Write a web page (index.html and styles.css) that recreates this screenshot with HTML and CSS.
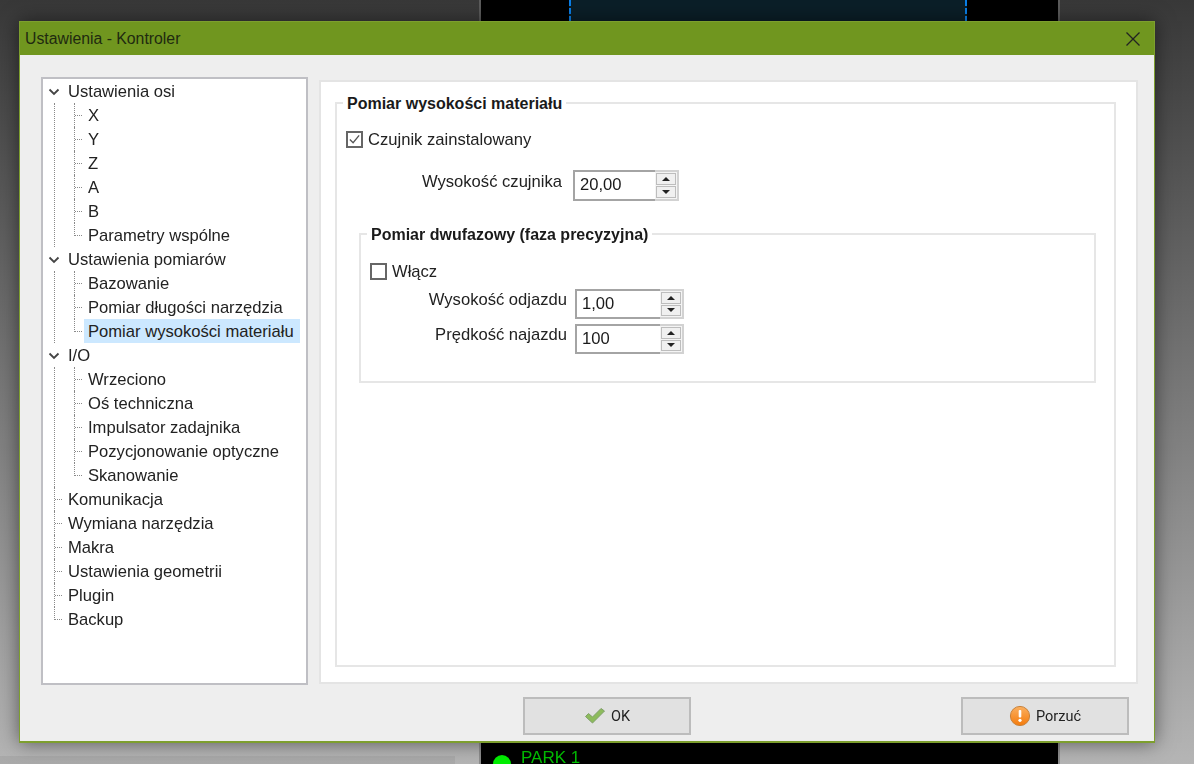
FILE: index.html
```html
<!DOCTYPE html>
<html lang="pl">
<head>
<meta charset="utf-8">
<title>Ustawienia - Kontroler</title>
<link rel="stylesheet" href="styles.css">
</head>
<body>
<div class="backdrop">
  <div class="strip"></div>
  <div class="app-top"><div class="app-view"></div></div>
  <div class="app-bottom">
    <span class="led"></span><span class="park">PARK 1</span>
  </div>
</div>
<div class="dialog">
  <header class="titlebar">
    <span>Ustawienia - Kontroler</span>
    <svg class="close" width="16" height="16" viewBox="0 0 16 16"><path d="M1.5 1.5l13 13M14.5 1.5l-13 13" stroke="#222" stroke-width="1.3" fill="none"/></svg>
  </header>
  <div class="content">
    <nav class="tree">
      <div class="row branch"><svg class="chev" width="12" height="8" viewBox="0 0 12 8"><path d="M1.5 1.5L6 6l4.5-4.5" stroke="#444" stroke-width="1.8" fill="none"/></svg>Ustawienia osi</div>
      <div class="children">
        <div class="row leaf">X</div>
        <div class="row leaf">Y</div>
        <div class="row leaf">Z</div>
        <div class="row leaf">A</div>
        <div class="row leaf">B</div>
        <div class="row leaf last">Parametry wspólne</div>
      </div>
      <div class="row branch"><svg class="chev" width="12" height="8" viewBox="0 0 12 8"><path d="M1.5 1.5L6 6l4.5-4.5" stroke="#444" stroke-width="1.8" fill="none"/></svg>Ustawienia pomiarów</div>
      <div class="children">
        <div class="row leaf">Bazowanie</div>
        <div class="row leaf">Pomiar długości narzędzia</div>
        <div class="row leaf last selected"><span class="sel">Pomiar wysokości materiału</span></div>
      </div>
      <div class="row branch"><svg class="chev" width="12" height="8" viewBox="0 0 12 8"><path d="M1.5 1.5L6 6l4.5-4.5" stroke="#444" stroke-width="1.8" fill="none"/></svg>I/O</div>
      <div class="children">
        <div class="row leaf">Wrzeciono</div>
        <div class="row leaf">Oś techniczna</div>
        <div class="row leaf">Impulsator zadajnika</div>
        <div class="row leaf">Pozycjonowanie optyczne</div>
        <div class="row leaf last">Skanowanie</div>
      </div>
      <div class="row top">Komunikacja</div>
      <div class="row top">Wymiana narzędzia</div>
      <div class="row top">Makra</div>
      <div class="row top">Ustawienia geometrii</div>
      <div class="row top">Plugin</div>
      <div class="row top last">Backup</div>
    </nav>
    <main class="panel">
      <fieldset class="group outer">
        <legend>Pomiar wysokości materiału</legend>
        <label class="check first"><span class="box"><svg width="14" height="14" viewBox="0 0 14 14"><path d="M2 7.5l3.5 3.5L12 3" stroke="#555" stroke-width="1.4" fill="none"/></svg></span>Czujnik zainstalowany</label>
        <div class="field sensor">
          <span class="field-label">Wysokość czujnika</span>
          <div class="spin wide">
            <span class="spin-value">20,00</span>
            <div class="spin-btns">
              <span class="spin-btn"><i class="up"></i></span>
              <span class="spin-btn"><i class="down"></i></span>
            </div>
          </div>
        </div>
        <fieldset class="group inner">
          <legend>Pomiar dwufazowy (faza precyzyjna)</legend>
          <label class="check"><span class="box"></span>Włącz</label>
          <div class="field phase">
            <span class="field-label">Wysokość odjazdu</span>
            <div class="spin">
              <span class="spin-value">1,00</span>
              <div class="spin-btns">
                <span class="spin-btn"><i class="up"></i></span>
                <span class="spin-btn"><i class="down"></i></span>
              </div>
            </div>
          </div>
          <div class="field phase">
            <span class="field-label">Prędkość najazdu</span>
            <div class="spin">
              <span class="spin-value">100</span>
              <div class="spin-btns">
                <span class="spin-btn"><i class="up"></i></span>
                <span class="spin-btn"><i class="down"></i></span>
              </div>
            </div>
          </div>
        </fieldset>
      </fieldset>
    </main>
  </div>
  <footer class="footer">
    <button class="btn" type="button">
      <svg width="22" height="18" viewBox="0 0 22 18"><path d="M1.5 9.5l3-3 4 3.5L17 1.5l3.5 2.5L8.5 16z" fill="#8dbb5c" stroke="#7f9f6a" stroke-width="1"/></svg>OK
    </button>
    <button class="btn" type="button">
      <svg width="22" height="22" viewBox="0 0 22 22"><defs><linearGradient id="ora" x1="0" y1="0" x2="0" y2="1"><stop offset="0" stop-color="#fbb060"/><stop offset="1" stop-color="#f47b0c"/></linearGradient></defs><circle cx="11" cy="11" r="9.6" fill="url(#ora)" stroke="#c9823a"/><rect x="9.7" y="5" width="2.6" height="7.5" rx="1" fill="#fff"/><circle cx="11" cy="15.3" r="1.6" fill="#fff"/></svg>Porzuć
    </button>
  </footer>
</div>
</body>
</html>
```

FILE: styles.css
```css
* { box-sizing: border-box; }
html, body { margin: 0; height: 100%; }
body {
  position: relative;
  width: 1194px;
  height: 764px;
  overflow: hidden;
  font-family: "Liberation Sans", Arial, sans-serif;
  font-size: 16.6px;
  color: #222;
  background: linear-gradient(#383838, #b5b5b5);
}
.backdrop { position: absolute; inset: 0; filter: blur(.4px); }
.strip {
  position: absolute; left: 0; bottom: 0; width: 455px; height: 8px;
  background: rgba(0,0,0,.06);
}
.app-top {
  position: absolute; left: 479px; top: 0; width: 581px; height: 30px;
  background: #000;
  border-left: 2px solid #5c5c5c;
  border-right: 2px solid #5c5c5c;
}
.app-view {
  margin-left: 88px; width: 398px; height: 30px;
  background: #0b1f28;
  border-left: 2px dashed #0a7fe8;
  border-right: 2px dashed #0a7fe8;
}
.app-bottom {
  position: absolute; left: 479px; top: 740px; width: 581px; height: 24px;
  background: #000;
  border-left: 2px solid #8c8c8c;
  border-right: 2px solid #8c8c8c;
  display: flex; align-items: flex-start;
  padding: 9px 0 0 12px;
  gap: 10px;
  color: #00c400;
}
.led { width: 18px; height: 18px; border-radius: 50%; background: #00f000; margin-top: 6px; }
.park { font-size: 17px; line-height: 18px; }

.dialog {
  position: absolute; left: 19px; top: 21px; width: 1136px; height: 722px;
  background: #eeeeee;
  border: 1px solid #7d9f2e;
  border-bottom-width: 2px;
  box-shadow: 0 0 18px rgba(0,0,0,.5);
  display: flex; flex-direction: column;
  padding-bottom: 6px;
  filter: blur(.35px);
}
.titlebar {
  height: 33px; flex: none;
  background: #70961f;
  display: flex; align-items: center; justify-content: space-between;
  padding: 0 13px 0 5px;
  font-size: 15.8px;
  color: #1f2a10;
}
.content {
  flex: 1; display: flex; gap: 11px;
  padding: 22px 16px 0 21px;
  min-height: 0;
}
.tree {
  width: 267px; flex: none;
  background: #fff;
  border: 2px solid #bfbfc4;
}
.row {
  position: relative;
  height: 24px;
  padding-top: 2px;
  display: flex; align-items: center;
  white-space: nowrap;
  color: #222;
}
.branch, .top { padding-left: 25px; }
.chev { position: absolute; left: 5px; top: 9px; }
.children { margin-left: 11px; border-left: 1px dotted #8a8a8a; }
.top::before, .top::after, .leaf::before, .leaf::after { content: ""; position: absolute; }
.top::before, .leaf::before {
  top: 0; bottom: 0; border-left: 1px dotted #8a8a8a;
}
.top::after, .leaf::after {
  top: 12px; height: 0; border-top: 1px dotted #8a8a8a;
}
.top::before { left: 11px; }
.top::after { left: 12px; width: 7px; }
.leaf { padding-left: 33px; }
.leaf::before { left: 19px; }
.leaf::after { left: 20px; width: 7px; }
.last::before { bottom: 11px; }
.selected { padding-top: 0; }
.sel {
  display: flex; align-items: center;
  margin-left: -4px; padding: 2px 0 0 4px;
  width: 216px; height: 24px;
  background: #cce8ff;
}
.panel {
  flex: 1; min-width: 0;
  margin: 3px 0 1px;
  background: #fff;
  border: 2px solid #e4e4e4;
  padding: 12px 20px 15px 14px;
  display: flex;
}
.group {
  margin: 0;
  border: 2px solid #e6e6e6;
  min-width: 0;
}
.group legend {
  position: relative;
  top: 1px;
  font-weight: bold;
  font-size: 16px;
  line-height: 18px;
  padding: 0 4px;
  margin-left: -3px;
  color: #1a1a1a;
}
.outer { flex: 1; padding: 0 18px 0 9px; margin: 0; }
.inner { margin: 24px 0 0 13px; height: 158px; padding: 0 9px; }
.check {
  display: flex; align-items: center; gap: 5px;
  height: 18px;
  padding-top: 2px;
}
.check.first { margin-top: 18px; }
.inner .check { margin-top: 19px; }
.box {
  width: 17px; height: 17px; flex: none;
  margin-top: -2px;
  border: 2px solid #666;
  background: #fff;
  display: flex; align-items: center; justify-content: center;
}
.field { display: flex; align-items: center; }
.field-label { text-align: right; position: relative; }
.sensor { margin-top: 22px; }
.sensor .field-label { width: 216px; margin-right: 11px; top: -4px; }
.phase { margin-top: 9px; }
.phase + .phase { margin-top: 5px; }
.phase .field-label { width: 197px; margin-right: 8px; top: -4px; }
.spin {
  width: 109px; height: 30px;
  display: flex;
  background: #fff;
}
.wide { width: 106px; height: 31px; }
.spin-value {
  flex: 1;
  padding-left: 5px;
  line-height: 26px;
  color: #1a1a1a;
  border: 2px solid #a4a4a4;
  border-right: 0;
}
.spin-btns {
  width: 24px; flex: none;
  background: #f4f4f4;
  border: 2px solid #d2d2d2;
  border-left: 0;
  display: flex; flex-direction: column; gap: 1px;
  padding: 1px;
}
.spin-btn {
  flex: 1;
  background: #f0f0f0;
  border: 1px solid #bdbdbd;
  display: flex; align-items: center; justify-content: center;
}
.spin-btn i { width: 0; height: 0; border-left: 4px solid transparent; border-right: 4px solid transparent; }
.up { border-bottom: 4px solid #222; }
.down { border-top: 4px solid #222; }
.footer {
  flex: none; display: flex; gap: 270px;
  margin-top: 12px;
  padding-left: 503px;
}
.btn {
  width: 168px; height: 38px;
  background: #e1e1e1;
  border: 2px solid #bcbcbc;
  display: flex; align-items: center; justify-content: center;
  gap: 5px;
  font-family: Roboto, "Liberation Sans", sans-serif;
  font-size: 14.5px;
  color: #222;
  padding: 0;
}
```
